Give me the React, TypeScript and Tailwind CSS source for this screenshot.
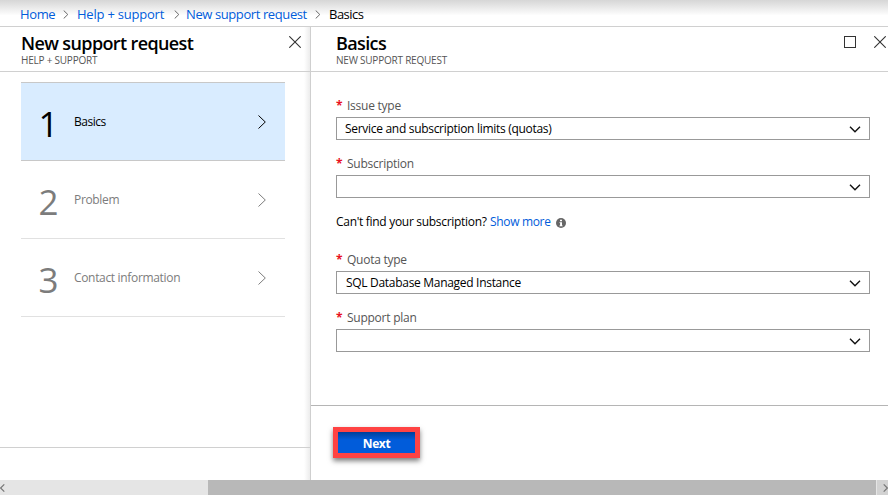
import type { ReactNode } from 'react';

function Chevron({ className }: { className?: string }) {
  return (
    <svg viewBox="0 0 8 14" className={className} fill="none" stroke="currentColor">
      <path d="M0.5 0.5L7.3 7L0.5 13.5" />
    </svg>
  );
}

function ScrollArrow({ className }: { className?: string }) {
  return (
    <svg viewBox="0 0 5 8" className={className} fill="none" stroke="currentColor" strokeWidth="1.2">
      <path d="M4.3 0.4L0.6 4L4.3 7.6" />
    </svg>
  );
}

function Close() {
  return (
    <svg viewBox="0 0 12 12" className="size-3 shrink-0" fill="none" stroke="#333" strokeWidth="1.1">
      <path d="M0.3 0.3L11.7 11.7M11.7 0.3L0.3 11.7" />
    </svg>
  );
}

function Separator() {
  return (
    <svg viewBox="0 0 6 9" className="h-[9px] w-1.5 shrink-0" fill="none" stroke="#666">
      <path d="M0.7 0.5L4.8 4.5L0.7 8.5" />
    </svg>
  );
}

function Breadcrumbs() {
  return (
    <nav className="flex h-[27px] shrink-0 items-center border-b border-[#d0d0d0] bg-linear-to-b from-[#d6d6d6] to-white to-60% pt-0.5 pl-5 text-[13px] leading-[18px] text-[#015cda]">
      <a className="w-[43px] tracking-[-0.38px]">Home</a>
      <Separator />
      <a className="ml-2 w-[96.5px] tracking-[-0.22px]">Help + support</a>
      <Separator />
      <a className="ml-[6.5px] w-[129px] tracking-[-0.4px]">New support request</a>
      <Separator />
      <span className="ml-2 tracking-[-0.5px] text-black">Basics</span>
    </nav>
  );
}

function Header({ title, subtitle, children }: { title: string; subtitle: string; children: ReactNode }) {
  return (
    <header className="flex h-11 shrink-0 justify-between">
      <div>
        <h1 className="mt-1.5 text-[18px] leading-5 font-semibold tracking-[-0.62px] text-black">{title}</h1>
        <p className="mt-0.5 text-[10px] leading-[10px] tracking-[-0.22px] text-[#555]">{subtitle}</p>
      </div>
      {children}
    </header>
  );
}

function Step({ number, label, active = false }: { number: number; label: string; active?: boolean }) {
  return (
    <li
      className={
        active
          ? 'flex h-[79px] items-center border-y border-[#c8c8c8] bg-[#d9ecff] text-black'
          : 'flex h-[78px] items-center border-b border-[#e1e1e1] text-[#7c7c7c]'
      }
    >
      <span className="mt-[5px] ml-[17.5px] w-[35.5px] text-[35px] leading-10 tracking-[-1px]">{number}</span>
      <span className={active ? 'mt-px grow text-[12px] tracking-[-0.5px]' : 'mt-px grow text-[12px] tracking-[-0.33px]'}>
        {label}
      </span>
      <Chevron className="mt-px mr-[19px] h-3.5 w-2" />
    </li>
  );
}

function Field({ label, value, inset = 'pl-2' }: { label: string; value?: string; inset?: string }) {
  return (
    <div className="h-[58px]">
      <div className="flex h-[19px] items-start text-[12px] leading-4 tracking-[-0.25px] text-[#555]">
        <span className="w-[11px] text-[12px] leading-4 font-bold text-[#e81123]">*</span>
        {label}
      </div>
      <div className={`flex h-[23px] items-center justify-between border border-[#999] pr-2 text-[12px] leading-4 tracking-[-0.3px] text-black ${inset}`}>
        <span>{value}</span>
        <svg viewBox="0 0 12 7" className="mt-0.5 h-[7px] w-3" fill="none" stroke="#111" strokeWidth="1.4">
          <path d="M1 0.7L6 5.7L11 0.7" />
        </svg>
      </div>
    </div>
  );
}

export default function App() {
  return (
    <div className="flex h-[495px] w-[888px] flex-col overflow-hidden bg-white font-['Open_Sans','Noto_Sans',sans-serif]">
      <Breadcrumbs />
      <main className="flex h-[453px] shrink-0">
        <section className="flex w-[311px] shrink-0 flex-col border-r border-[#cfcfcf] bg-[linear-gradient(to_left,#ececec,#fff_6px)]">
          <div className="border-b border-[#d0d0d0] pr-[9px] pl-[21px]">
            <Header title="New support request" subtitle="HELP + SUPPORT">
              <div className="mt-[9px]">
                <Close />
              </div>
            </Header>
          </div>
          <ol className="mt-[10px] ml-[21px] w-[264px] grow">
            <Step number={1} label="Basics" active />
            <Step number={2} label="Problem" />
            <Step number={3} label="Contact information" />
          </ol>
          <footer className="h-[33px] shrink-0 border-t border-[#d0d0d0]" />
        </section>
        <section className="flex grow flex-col">
          <div className="border-b border-[#d0d0d0] pr-0.5 pl-[25px]">
            <Header title="Basics" subtitle="NEW SUPPORT REQUEST">
              <div className="mt-[9px] flex gap-[18px]">
                <div className="size-3 border border-[#333]" />
                <Close />
              </div>
            </Header>
          </div>
          <form className="grow pt-[26px] pr-[18px] pl-[25px]">
            <Field label="Issue type" value="Service and subscription limits (quotas)" />
            <Field label="Subscription" />
            <p className="flex h-[38px] items-start text-[12px] leading-4 text-black">
              <span className="w-[154px] tracking-[-0.3px]">Can't find your subscription?</span>
              <a className="w-[65.5px] tracking-[-0.33px] text-[#015cda]">Show more</a>
              <svg viewBox="0 0 10 10" className="mt-1 size-2.5">
                <circle cx="5" cy="5" r="5" fill="#666" />
                <path d="M4 1.7h2v1.5H4zM3.5 4.2H6v3.2h.7v.9H3.4v-.9h.7V5.1h-.6z" fill="#fff" />
              </svg>
            </p>
            <Field label="Quota type" value="SQL Database Managed Instance" inset="pl-[9px]" />
            <Field label="Support plan" />
          </form>
          <footer className="h-[75px] shrink-0 border-t border-[#b5b5b5] pt-[21px] pl-[22px]">
            <button className="block h-[31px] w-[87px] border-5 border-[#ff4343] bg-[#015cda] bg-[linear-gradient(#003f99,#015cda_8px)] pt-0.5 text-[12px] leading-[19px] font-bold tracking-[-0.4px] text-white shadow-[0_3px_5px_rgba(0,0,0,0.5)]">
              Next
            </button>
          </footer>
        </section>
      </main>
      <div className="flex h-[15px] bg-[#e5e5e5] text-[#777]">
        <div className="flex w-[208px] items-center">
          <ScrollArrow className="mt-px h-2 w-[5px]" />
        </div>
        <div className="w-[668px] bg-[#b8b8b8]" />
        <div className="ml-px flex grow items-center bg-[#d2d2d2] pl-1.5">
          <ScrollArrow className="mt-px h-2 w-[5px] rotate-180" />
        </div>
      </div>
    </div>
  );
}
